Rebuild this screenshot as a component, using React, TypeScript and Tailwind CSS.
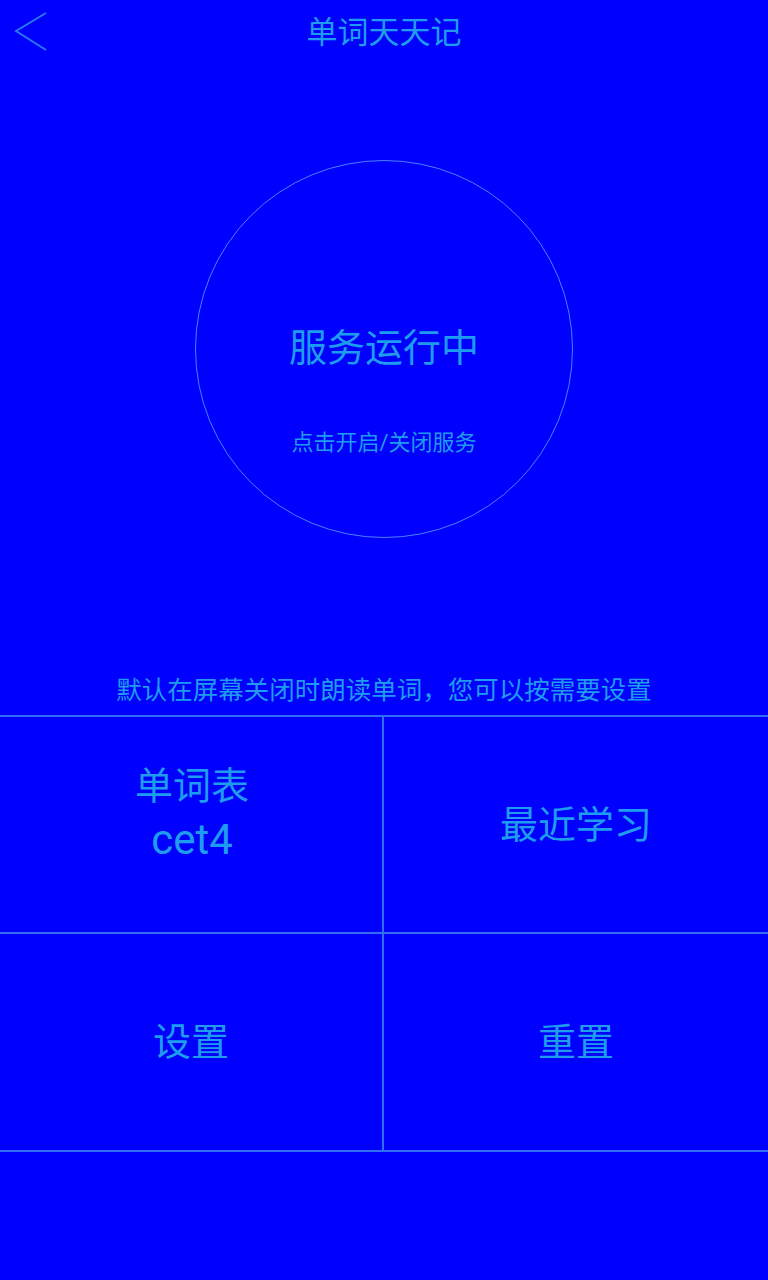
export default function App() {
  const font = { fontFamily: 'Roboto, "Noto Sans CJK SC", sans-serif' };
  return (
    <div className="min-h-[1280px] w-[768px] bg-[#0000ff] text-[#1e9cf0]" style={font}>
      {/* Header */}
      <div className="relative h-16 flex items-center justify-center">
        <button className="absolute left-[14px] top-[11px] w-[36px] h-[42px]">
          <svg width="36" height="42" viewBox="0 0 36 42" fill="none">
            <path d="M32 2 L2 20 L32 39" stroke="#2a7cf2" strokeWidth="1.8" />
          </svg>
        </button>
        <h1 className="text-[31px] leading-none">单词天天记</h1>
      </div>

      {/* Service circle */}
      <div className="mt-[96px] mx-auto w-[378px] h-[378px] rounded-full border border-[#4f80ff] flex flex-col items-center pt-[164px]">
        <div className="text-[38px] leading-[46px]">服务运行中</div>
        <div className="mt-[57px] text-[22px] leading-[30px]">点击开启/关闭服务</div>
      </div>

      {/* Hint */}
      <p className="mt-[137px] mb-[10px] text-center text-[25.5px] leading-[30px]">
        默认在屏幕关闭时朗读单词，您可以按需要设置
      </p>

      {/* Grid */}
      <div className="grid grid-cols-2 border-t-2 border-b-2 border-[#2f6ef4]">
        <div className="h-[217px] border-r-2 border-b-2 border-[#2f6ef4] flex flex-col items-center justify-center pb-[24px] pl-[2px]">
          <div className="text-[38px] leading-[54px]">单词表</div>
          <div className="text-[42px] leading-[54px]">cet4</div>
        </div>
        <div className="h-[217px] border-b-2 border-[#2f6ef4] flex items-center justify-center">
          <div className="text-[38px] leading-[46px]">最近学习</div>
        </div>
        <div className="h-[216px] border-r-2 border-[#2f6ef4] flex items-center justify-center">
          <div className="text-[38px] leading-[46px]">设置</div>
        </div>
        <div className="h-[216px] flex items-center justify-center">
          <div className="text-[38px] leading-[46px]">重置</div>
        </div>
      </div>
    </div>
  );
}
